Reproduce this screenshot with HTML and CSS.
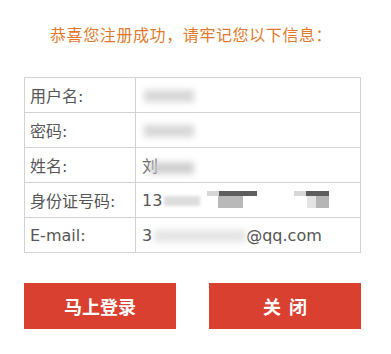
FILE: index.html
```html
<!DOCTYPE html>
<html lang="zh-CN">
<head>
<meta charset="utf-8">
<title>注册成功</title>
<link rel="stylesheet" href="styles.css">
</head>
<body>
<div class="page">
  <h1 class="title">恭喜您注册成功，请牢记您以下信息：</h1>
  <table class="info">
    <tr><td class="label">用户名:</td><td class="value"><span class="blur b1"></span></td></tr>
    <tr><td class="label">密码:</td><td class="value"><span class="blur b1"></span></td></tr>
    <tr><td class="label">姓名:</td><td class="value"><span class="name">刘</span><span class="blur b2"></span></td></tr>
    <tr><td class="label">身份证号码:</td><td class="value">13<span class="blur b3"></span><span class="mask m1"><span class="line"></span><span class="box"></span></span><span class="mask m2"><span class="line"></span><span class="box"></span></span></td></tr>
    <tr><td class="label">E-mail:</td><td class="value">3<span class="blur b4"></span>@qq.com</td></tr>
  </table>
  <div class="actions">
    <button class="btn">马上登录</button>
    <button class="btn">关&nbsp;&nbsp;闭</button>
  </div>
</div>
</body>
</html>
```
FILE: styles.css
```css
html, body {
  margin: 0;
  padding: 0;
  background: #ffffff;
}
.page {
  width: 337px;
  padding: 0 30px 0 24px;
  font-family: "DejaVu Sans", "Noto Sans CJK SC", sans-serif;
}
.title {
  margin: 0;
  padding: 24px 0 0 26px;
  height: 77px;
  box-sizing: border-box;
  font-family: "Noto Sans CJK SC", sans-serif;
  font-size: 16px;
  line-height: 20px;
  font-weight: normal;
  letter-spacing: 0.6px;
  color: #e17a2c;
  white-space: nowrap;
}
.info {
  width: 337px;
  border-collapse: collapse;
  border: 1px solid #c9c9c9;
}
.info td {
  border: 1px solid #d2d2d2;
  height: 34px;
  padding: 0;
  font-size: 16px;
  color: #555;
  vertical-align: middle;
}
.label {
  width: 105px;
  padding-left: 5px !important;
}
.value {
  padding-left: 6px !important;
  white-space: nowrap;
  position: relative;
}
.blur {
  display: inline-block;
  vertical-align: middle;
  height: 12px;
  background: #bdbdbd;
  filter: blur(3px);
  opacity: 0.6;
}
.b1 { width: 50px; margin-left: 2px; }
.b2 { width: 44px; margin-left: -8px; position: relative; background: #c8c8c8; opacity: 0.85; }
.b3 { width: 36px; margin-left: 2px; height: 10px; opacity: 0.5; filter: blur(1.5px); }
.b4 { width: 92px; margin-left: 2px; opacity: 0.4; }
.name {
  color: #666;
}
.mask {
  position: absolute;
  top: 8px;
  height: 17px;
}
.mask .line {
  position: absolute;
  top: 0;
  right: 0;
  height: 5px;
  background: linear-gradient(90deg, #d6d6d6 0 25%, #5e5e5e 25%);
  filter: blur(0.5px);
}
.mask .box {
  position: absolute;
  top: 5px;
  height: 12px;
  background: #b9b9b9;
  filter: blur(0.6px);
}
.m1 { left: 71px; width: 50px; }
.m1 .line { width: 50px; }
.m1 .box { left: 11px; width: 25px; }
.m2 { left: 158px; width: 35px; }
.m2 .line { width: 35px; background: linear-gradient(90deg, #d6d6d6 0 35%, #5e5e5e 35%); }
.m2 .box { left: 13px; width: 22px; background: linear-gradient(90deg, #e3e3e3 0 40%, #b5b5b5 40%); }
.actions {
  display: flex;
  gap: 33px;
  margin-top: 30px;
}
.btn {
  width: 152px;
  height: 46px;
  border: none;
  background: #d9402f;
  color: #fff;
  font-family: "Noto Sans CJK SC", sans-serif;
  font-size: 18px;
  font-weight: bold;
  padding: 0;
}
```
